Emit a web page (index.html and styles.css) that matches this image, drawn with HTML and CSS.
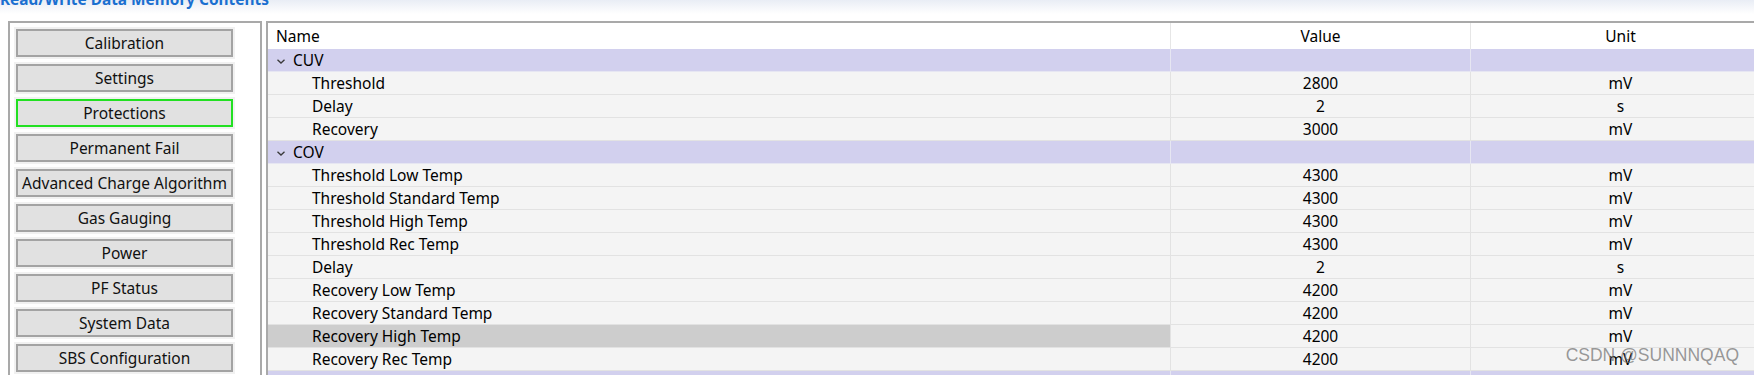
FILE: index.html
```html
<!DOCTYPE html>
<html lang="en">
<head>
    <meta charset="UTF-8">
    <title>Read/Write Data Memory Contents</title>
    <link rel="stylesheet" href="styles.css">
</head>
<body>
    <h1 class="title">Read/Write Data Memory Contents</h1>

    <div class="workspace">
        <!-- Class selector -->
        <div class="side">
            <button class="side-btn">Calibration</button>
            <button class="side-btn">Settings</button>
            <button class="side-btn active">Protections</button>
            <button class="side-btn">Permanent Fail</button>
            <button class="side-btn">Advanced Charge Algorithm</button>
            <button class="side-btn">Gas Gauging</button>
            <button class="side-btn">Power</button>
            <button class="side-btn">PF Status</button>
            <button class="side-btn">System Data</button>
            <button class="side-btn">SBS Configuration</button>
        </div>

        <!-- Parameter grid -->
        <div class="grid">
            <table class="params">
                <colgroup>
                    <col class="col-name">
                    <col class="col-value">
                    <col class="col-unit">
                </colgroup>
                <thead>
                    <tr><th class="name">Name</th><th>Value</th><th>Unit</th></tr>
                </thead>
                <tbody>
                    <tr class="group">
                        <td class="name"><svg class="chev" width="8" height="5" viewBox="0 0 8 5"><polyline points="0.5,0.7 4,4 7.5,0.7" fill="none" stroke="#3a3a3a" stroke-width="1.3"/></svg>CUV</td><td></td><td></td>
                    </tr>
                    <tr><td class="name child">Threshold</td><td>2800</td><td>mV</td></tr>
                    <tr><td class="name child">Delay</td><td>2</td><td>s</td></tr>
                    <tr><td class="name child">Recovery</td><td>3000</td><td>mV</td></tr>
                    <tr class="group">
                        <td class="name"><svg class="chev" width="8" height="5" viewBox="0 0 8 5"><polyline points="0.5,0.7 4,4 7.5,0.7" fill="none" stroke="#3a3a3a" stroke-width="1.3"/></svg>COV</td><td></td><td></td>
                    </tr>
                    <tr><td class="name child">Threshold Low Temp</td><td>4300</td><td>mV</td></tr>
                    <tr><td class="name child">Threshold Standard Temp</td><td>4300</td><td>mV</td></tr>
                    <tr><td class="name child">Threshold High Temp</td><td>4300</td><td>mV</td></tr>
                    <tr><td class="name child">Threshold Rec Temp</td><td>4300</td><td>mV</td></tr>
                    <tr><td class="name child">Delay</td><td>2</td><td>s</td></tr>
                    <tr><td class="name child">Recovery Low Temp</td><td>4200</td><td>mV</td></tr>
                    <tr><td class="name child">Recovery Standard Temp</td><td>4200</td><td>mV</td></tr>
                    <tr><td class="name child selected">Recovery High Temp</td><td>4200</td><td>mV</td></tr>
                    <tr><td class="name child">Recovery Rec Temp</td><td>4200</td><td>mV</td></tr>
                    <tr class="group"><td class="name"></td><td></td><td></td></tr>
                </tbody>
            </table>
        </div>
    </div>

    <div class="watermark">CSDN @SUNNNQAQ</div>
</body>
</html>
```

FILE: styles.css
```css
html, body { overflow: hidden; }
body { margin: 0; height: 375px; font-family: "Noto Sans", sans-serif; font-size: 15.5px; color: #000; background: linear-gradient(#e9edf5, #ffffff 14px); position: relative; }
.title { margin: -8px 0 0 0; font-size: 15.4px; line-height: 16px; font-weight: bold; color: #1a6fd0; }

.workspace { display: flex; margin-top: 13px; padding-left: 8px; }

.side { box-sizing: border-box; width: 254px; height: 400px; flex: none; border: 2px solid #a9a9a9; padding: 6px 0 0 6px; display: flex; flex-direction: column; gap: 7px; }
.side-btn { box-sizing: border-box; width: 217px; height: 28px; padding: 0; border: 2px solid #a3a3a3; background: #e1e1e1; box-shadow: 0 0 0 2px #f1f1f1; font-family: inherit; font-size: 15.5px; color: #111; line-height: 24px; white-space: nowrap; }
.side-btn.active { border-color: #22e022; }

.grid { flex: 1; margin-left: 4px; height: 400px; border-left: 2px solid #a9a9a9; border-top: 2px solid #a9a9a9; overflow: hidden; background: #fff; }
.params { table-layout: fixed; width: 1503px; border-collapse: separate; border-spacing: 0; }
.col-name { width: 903px; }
.col-value { width: 300px; }
.col-unit { width: 300px; }

.params th { font-weight: normal; line-height: 26px; padding: 0; text-align: center; border-right: 1px solid #e6e6e6; }
.params td { height: 22px; line-height: 22px; padding: 0; text-align: center; border-right: 1px solid #e2e2e2; border-bottom: 1px solid #e2e2e2; background: #f4f4f4; white-space: nowrap; }
.params .name { text-align: left; padding-left: 8px; }
.params td.child { padding-left: 44px; }
.params td.selected { background: #cdcdcd; }
.params .group td { background: #d2d0ee; border-color: #e6e6f2; }
.params .group td.name { padding-left: 9px; }
.chev { margin-right: 8px; vertical-align: 2px; }

.watermark { position: absolute; right: 15px; top: 345px; font-family: "Liberation Sans", Arial, sans-serif; font-size: 17.5px; color: rgba(110, 110, 110, 0.7); }
```
